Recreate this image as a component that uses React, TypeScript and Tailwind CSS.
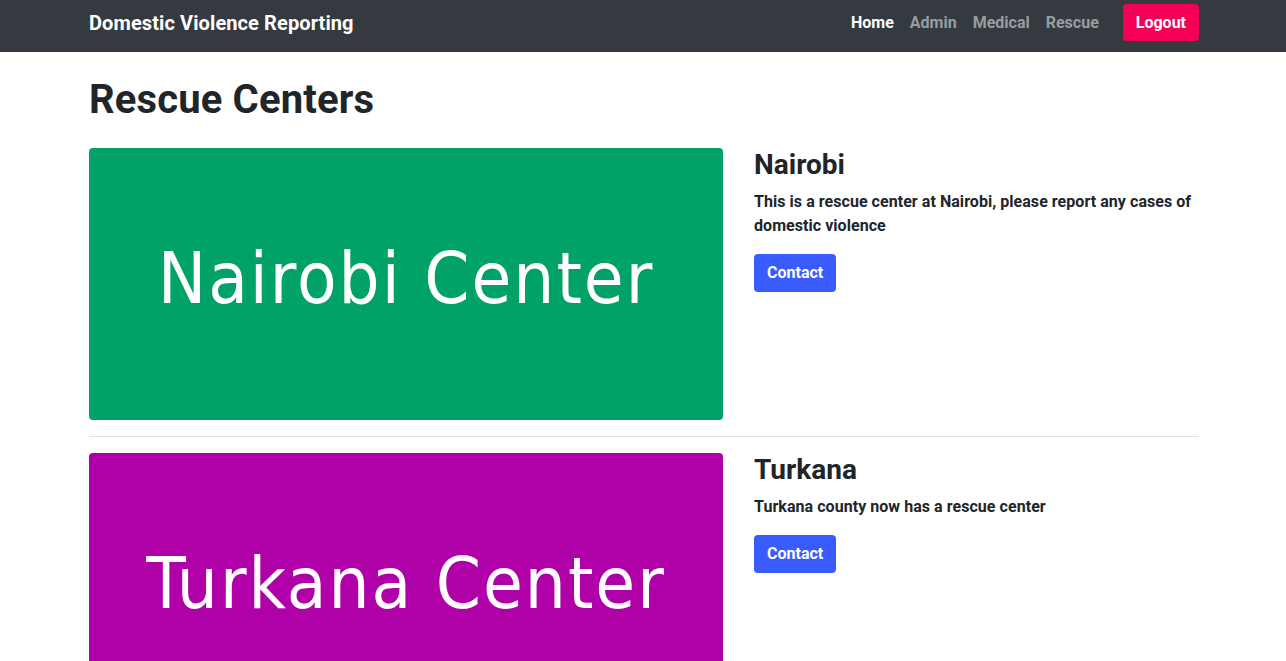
const centers = [
  {
    name: "Nairobi",
    text: "This is a rescue center at Nairobi, please report any cases of domestic violence",
    label: "Nairobi Center",
    bg: "bg-[#00a268]",
  },
  {
    name: "Turkana",
    text: "Turkana county now has a rescue center",
    label: "Turkana Center",
    bg: "bg-[#b000a8]",
  },
]

function Navbar() {
  return (
    <nav className="h-[52px] bg-[#343a40]">
      <div className="mx-auto flex h-full w-[1110px] translate-x-px items-center justify-between pb-[7px]">
        <div className="text-[20px] tracking-[0.1px] font-bold text-white">Domestic Violence Reporting</div>
        <div className="flex items-center">
          <a className="px-2 text-white">Home</a>
          <a className="px-2 text-white/50">Admin</a>
          <a className="px-2 text-white/50">Medical</a>
          <a className="px-2 text-white/50">Rescue</a>
          <button className="ml-4 h-[37px] rounded-[4px] bg-[#f50057] px-[13px] text-white">Logout</button>
        </div>
      </div>
    </nav>
  )
}

function Center({ c, last }: { c: (typeof centers)[number]; last: boolean }) {
  return (
    <>
      <div className="flex">
        <div
          className={`flex h-[272px] w-[634px] shrink-0 items-center justify-center rounded-[4px] pb-3 ${c.bg}`}
        >
          <span className="text-[72px] font-normal tracking-[2px] text-white [font-family:'DejaVu_Sans_Condensed','DejaVu_Sans',sans-serif] [font-stretch:semi-condensed]">
            {c.label}
          </span>
        </div>
        <div className="ml-[31px] w-[445px]">
          <h3 className="mb-2 text-[28px] leading-[1.2] font-bold">{c.name}</h3>
          <p className="mb-4 leading-6 font-bold tracking-[0.05px]">{c.text}</p>
          <button className="h-[38px] rounded-[4px] bg-[#3a5cff] px-[13px] text-white">Contact</button>
        </div>
      </div>
      {!last && <hr className="my-4 border-[#e0e0e0]" />}
    </>
  )
}

export default function App() {
  return (
    <div className="min-h-screen bg-white font-['Roboto',sans-serif] font-bold text-[#212529]">
      <Navbar />
      <main className="mx-auto w-[1110px] translate-x-px pt-6">
        <h1 className="mb-6 text-[40px] leading-[1.2] font-bold tracking-[0.15px]">Rescue Centers</h1>
        {centers.map((c, i) => (
          <Center key={c.name} c={c} last={i === centers.length - 1} />
        ))}
      </main>
    </div>
  )
}
